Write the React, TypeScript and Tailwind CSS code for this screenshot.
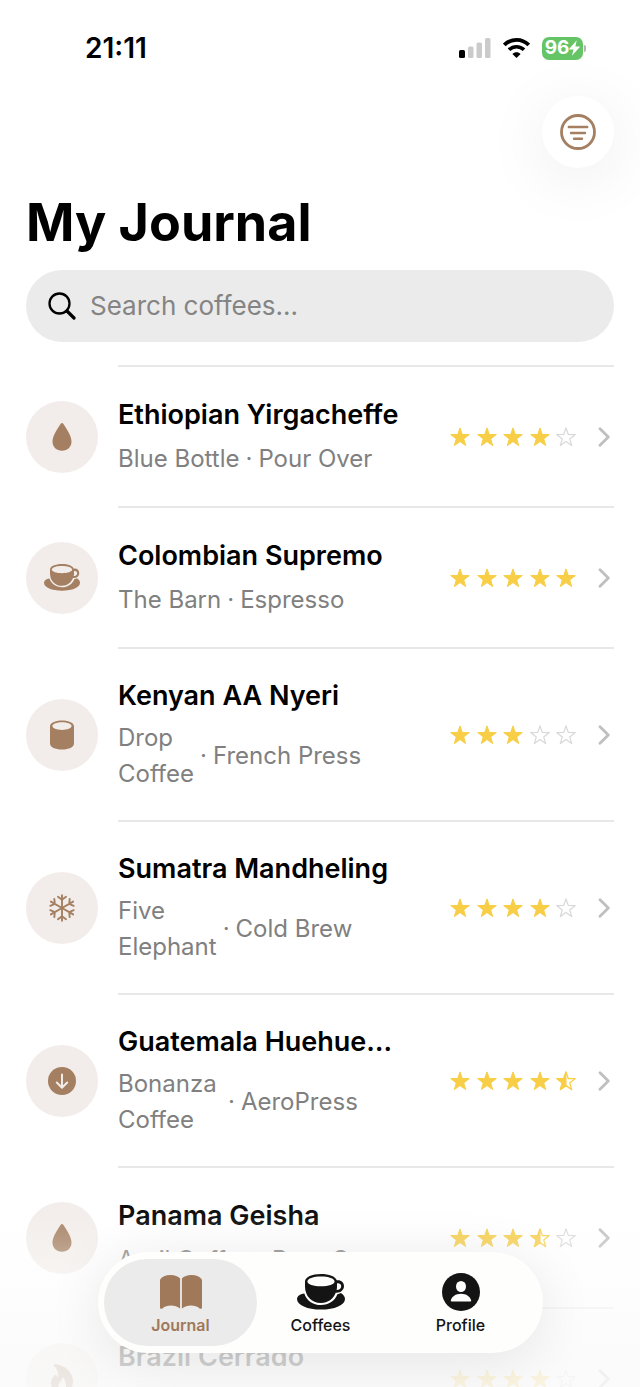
import type { ReactNode } from "react";

type IconName = "drop" | "cup" | "cylinder" | "snow" | "down" | "flame";

type Entry = {
  name: string;
  roaster: string;
  method: string;
  rating: number;
  icon: IconName;
  wrapClass?: string;
};

const entries: Entry[] = [
  { name: "Ethiopian Yirgacheffe", roaster: "Blue Bottle", method: "Pour Over", rating: 4, icon: "drop" },
  { name: "Colombian Supremo", roaster: "The Barn", method: "Espresso", rating: 5, icon: "cup" },
  { name: "Kenyan AA Nyeri", roaster: "Drop Coffee", method: "French Press", rating: 3, icon: "cylinder", wrapClass: "w-min" },
  { name: "Sumatra Mandheling", roaster: "Five Elephant", method: "Cold Brew", rating: 4, icon: "snow", wrapClass: "w-min" },
  { name: "Guatemala Huehuetenango", roaster: "Bonanza Coffee", method: "AeroPress", rating: 4.5, icon: "down", wrapClass: "w-[104px]" },
  { name: "Panama Geisha", roaster: "April Coffee", method: "Pour Over", rating: 3.5, icon: "drop" },
  { name: "Brazil Cerrado", roaster: "Square Mile", method: "Moka Pot", rating: 4, icon: "flame" },
];

function CupIcon({ className }: { className: string }) {
  return (
    <svg viewBox="0 0 48 36" className={className} fill="currentColor" aria-hidden="true">
      <path
        fillRule="evenodd"
        d="M8 7.5C8 3 15 0 24 0c8 0 14.500 2.300 15.800 6.300 4-.8 7.200 1.900 7.200 5.700 0 4.200-3.600 7.200-8.300 6.700C36.300 24.700 31 29 24 29 14.500 29 8 22 8 12.500V7.500ZM24 2.500C16.500 2.500 10.400 4.600 10.400 7.400S16.500 12.300 24 12.300s13.600-2.100 13.600-4.900S31.500 2.500 24 2.500ZM40 9.300v3.200c0 1.300-.1 2.500-.4 3.600 2.700-.1 4.600-1.700 4.600-3.900 0-2-1.800-3.300-4.200-2.900Z"
      />
      <path d="M7.300 19.400C9.500 26.400 15.800 31 24 31c7.800 0 14-4.200 16.400-10.700 1.200-.3 2.400-.7 3.500-1.300 2.500 1.500 4.100 3.800 4.100 6C48 31.200 37.500 35.600 24 35.600S0 31.200 0 25c0-2.600 2.800-5.200 7.300-5.600Z" />
    </svg>
  );
}

function MethodIcon({ name }: { name: IconName }) {
  switch (name) {
    case "drop":
      return (
        <svg viewBox="0 0 20 28" className="h-7 w-5" fill="currentColor" aria-hidden="true">
          <path d="M10 0c.6 0 1 .4 1.400 1C15 6.500 19.500 13 19.500 18.500c0 5.600-4 9.200-9.500 9.200S.5 24.100.5 18.500C.5 13 5 6.500 8.600 1 9 .4 9.400 0 10 0Z" />
        </svg>
      );
    case "cup":
      return <CupIcon className="h-[27px] w-9" />;
    case "cylinder":
      return (
        <svg viewBox="0 0 24 30" className="h-[30px] w-6" fill="currentColor" aria-hidden="true">
          <path
            fillRule="evenodd"
            d="M0 6.500C0 3 5 .5 12 .5s12 2.500 12 6v17c0 3.700-5 6-12 6s-12-2.300-12-6v-17ZM12 2.200C6.700 2.200 2.400 3.900 2.400 6.100S6.700 10 12 10s9.600-1.700 9.600-3.900S17.300 2.200 12 2.200Z"
          />
        </svg>
      );
    case "snow":
      return (
        <svg viewBox="-14 -14 28 28" className="size-7" fill="none" stroke="currentColor" strokeWidth="1.9" strokeLinecap="round" strokeLinejoin="round" aria-hidden="true">
          {[0, 60, 120, 180, 240, 300].map((angle) => (
            <path key={angle} transform={`rotate(${angle})`} d="M0 0V-12.800M-4-11.200 0-8.300 4-11.200" />
          ))}
        </svg>
      );
    case "down":
      return (
        <svg viewBox="0 0 28 28" className="size-7" aria-hidden="true">
          <circle cx="14" cy="14" r="14" fill="currentColor" />
          <path d="M14 7.500v12.800M8.800 15.500l5.200 5.200 5.200-5.200" fill="none" stroke="#f2edea" strokeWidth="2" strokeLinecap="round" strokeLinejoin="round" />
        </svg>
      );
    case "flame":
      return (
        <svg viewBox="0 0 24 30" className="h-[30px] w-6" fill="currentColor" aria-hidden="true">
          <path
            fillRule="evenodd"
            d="M4 1.500C3.500.7 4.200.2 5 .3 15 1 23 8 23 17.500 23 25 18 29.500 12 29.500S1 25.500 1 19.500c0-4 2-7 4-8.500.7-.5 1.400-.2 1.700.5.300.8.800 1.300 1.400 1.600C8.500 8.500 7 5 4 1.500ZM12.500 13c.5 3.500-4 5-4 9 0 2.500 1.500 4 3.700 4s3.800-1.600 3.800-4c0-3.200-1-6.500-3.500-9Z"
          />
        </svg>
      );
  }
}

const STAR = "M10 .9 12.300 7.500 19.300 7.600 13.700 11.900 15.700 18.600 10 14.600 4.300 18.600 6.300 11.900 .7 7.600 7.700 7.500Z";

function Star({ fill }: { fill: "full" | "half" | "empty" }) {
  if (fill === "empty") {
    return (
      <svg viewBox="0 0 20 20" className="size-5" fill="none" stroke="#d8d8da" strokeWidth="1.2" strokeLinejoin="round" aria-hidden="true">
        <path d={STAR} />
      </svg>
    );
  }
  return (
    <svg viewBox="0 0 20 20" className="size-5 text-[#f7ce46]" stroke="currentColor" strokeWidth="1" strokeLinejoin="round" aria-hidden="true">
      {fill === "full" ? (
        <path d={STAR} fill="currentColor" />
      ) : (
        <>
          <path d={STAR} fill="none" strokeWidth="1.3" />
          <path d="M10 .9V14.600L4.300 18.600 6.300 11.900 .7 7.600 7.700 7.500Z" fill="currentColor" />
        </>
      )}
    </svg>
  );
}

function Rating({ value }: { value: number }) {
  return (
    <span role="img" aria-label={`${value} out of 5`} className="flex w-[126px] shrink-0 justify-between">
      {[1, 2, 3, 4, 5].map((n) => (
        <Star key={n} fill={value >= n ? "full" : value >= n - 0.5 ? "half" : "empty"} />
      ))}
    </span>
  );
}

function EntryRow({ entry }: { entry: Entry }) {
  return (
    <li>
      <a href="#entry" className="flex items-stretch gap-5">
        <span className="flex items-center pt-0.5">
          <span className="flex size-[72px] items-center justify-center rounded-full bg-[#f2edea] text-[#a47f61]">
            <MethodIcon name={entry.icon} />
          </span>
        </span>
        <span
          className={
            entry.wrapClass
              ? "flex min-h-[173px] min-w-0 flex-1 items-center border-t-2 border-[#e8e8e8] py-7"
              : "flex min-h-[141px] min-w-0 flex-1 items-center border-t-2 border-[#e8e8e8] py-7"
          }
        >
          <span className={entry.wrapClass ? "flex min-w-0 flex-1 flex-col gap-1.5 pr-[50px]" : "flex min-w-0 flex-1 flex-col gap-2 pr-[50px]"}>
            <span className="truncate text-[27px] leading-9 font-semibold text-black">{entry.name}</span>
            <span className="flex items-center gap-1.5 text-2xl leading-9 text-[#808080]">
              <span className={entry.wrapClass ?? "whitespace-nowrap"}>{entry.roaster}</span>
              <span>·</span>
              <span className="whitespace-nowrap">{entry.method}</span>
            </span>
          </span>
          <Rating value={entry.rating} />
          <svg viewBox="0 0 12 20" className="mr-1 ml-[22px] h-5 w-3 shrink-0" fill="none" stroke="#bfbfbf" strokeWidth="2.800" strokeLinecap="round" strokeLinejoin="round" aria-hidden="true">
            <path d="M2 1.800 10.300 10 2 18.200" />
          </svg>
        </span>
      </a>
    </li>
  );
}

function StatusBar() {
  return (
    <div className="flex h-24 items-center justify-between pr-[54px] pl-[85px]">
      <span className="text-[28px] leading-8 font-semibold">21:11</span>
      <div className="flex items-center gap-3">
        <svg viewBox="0 0 32 20" className="h-5 w-8" aria-hidden="true">
          <rect x="0" y="12" width="6" height="8" rx="1.500" fill="#000" />
          <rect x="9" y="8.500" width="5.500" height="11.500" rx="1.500" fill="#cbcbcb" />
          <rect x="17.500" y="4.500" width="5.500" height="15.500" rx="1.500" fill="#cbcbcb" />
          <rect x="26" y="0" width="5.500" height="20" rx="1.500" fill="#cbcbcb" />
        </svg>
        <svg viewBox="0 0 27 20" className="h-5 w-[27px]" fill="none" stroke="#000" aria-hidden="true">
          <path d="M1.300 7C8 .2 19 .2 25.700 7" strokeWidth="3.800" />
          <path d="M6 11.800c4.200-4.100 10.800-4.100 15 0" strokeWidth="3.600" />
          <path d="M13.500 20 9.400 15.900c2.300-2.300 5.900-2.300 8.200 0Z" fill="#000" stroke="none" />
        </svg>
        <div className="flex items-center gap-px">
          <div className="flex h-[23px] w-[41px] items-center justify-center rounded-[7px] bg-[#65c466] text-white">
            <span className="text-[19px] leading-5 font-bold">96</span>
            <svg viewBox="0 0 10 14" className="h-4 w-[11px]" fill="currentColor" aria-hidden="true">
              <path d="M7 0 .3 7.600C0 8 .2 8.300.600 8.300H4.200L2.600 14 9.700 6.300C10 5.900 9.800 5.600 9.400 5.600H5.800Z" />
            </svg>
          </div>
          <span className="h-[7px] w-[2px] rounded-r-full bg-[#b5b5b5]" />
        </div>
      </div>
    </div>
  );
}

function Tab({ label, active, children }: { label: string; active?: boolean; children: ReactNode }) {
  return (
    <button
      type="button"
      aria-current={active ? "page" : undefined}
      className={
        active
          ? "flex w-[153px] flex-col items-center justify-center gap-0.5 rounded-full bg-[#ebebeb] pt-1 text-[#a0785a]"
          : "flex w-[153px] flex-col items-center justify-center gap-0.5 rounded-full pt-1 text-[#141414]"
      }
    >
      <span className="flex h-[38px] items-center">{children}</span>
      <span className={active ? "text-base leading-6 font-semibold" : "text-base leading-6 font-medium"}>{label}</span>
    </button>
  );
}

export default function App() {
  return (
    <div className="relative flex h-screen flex-col overflow-hidden bg-white font-['Inter',sans-serif] text-black">
      <StatusBar />
      <header className="px-[26px]">
        <div className="flex justify-end">
          <button type="button" aria-label="Filter" className="flex size-[72px] items-center justify-center rounded-full bg-white text-[#a47f61] shadow-[0_10px_64px_rgba(0,0,0,0.08)]">
            <svg viewBox="0 0 36 36" className="size-9" fill="none" stroke="currentColor" strokeLinecap="round" aria-hidden="true">
              <circle cx="18" cy="18" r="16.500" strokeWidth="2.800" />
              <path d="M8.800 13h18.400M11 19h14M14 24.700h8" strokeWidth="2.400" />
            </svg>
          </button>
        </div>
        <h1 className="mt-5 text-[52px] leading-[70px] font-bold">My Journal</h1>
        <div className="mt-3 flex h-[72px] items-center gap-3.5 rounded-full bg-[#ebebeb] px-[22px]">
          <svg viewBox="0 0 28 28" className="size-7 shrink-0" fill="none" stroke="#000" strokeLinecap="round" aria-hidden="true">
            <circle cx="11.500" cy="11.500" r="10" strokeWidth="2.300" />
            <path d="m19 19 7 7" strokeWidth="3.200" />
          </svg>
          <input type="search" aria-label="Search coffees" placeholder="Search coffees..." className="min-w-0 flex-1 bg-transparent text-[26px] leading-9 outline-none placeholder:text-[#848484]" />
        </div>
      </header>
      <main className="mt-[23px] min-h-0 flex-1 overflow-hidden px-[26px]">
        <ul>
          {entries.map((entry) => (
            <EntryRow key={entry.name} entry={entry} />
          ))}
        </ul>
      </main>
      <div className="pointer-events-none absolute inset-x-0 bottom-0 h-[200px] bg-[linear-gradient(to_bottom,rgba(252,252,252,0)_0%,rgba(252,252,252,0.08)_15%,rgba(252,252,252,0.22)_27%,rgba(252,252,252,0.7)_60%,rgba(250,250,250,0.82)_85%,rgba(250,250,250,0.86)_100%)]" />
      <nav aria-label="Main" className="absolute bottom-[34px] left-[98px] flex h-[101px] -space-x-[13px] rounded-full bg-[#fefefd] px-1.5 py-[7px] shadow-[0_8px_56px_rgba(0,0,0,0.09)]">
        <Tab label="Journal" active>
          <svg viewBox="0 0 44 36" className="h-9 w-11" fill="currentColor" aria-hidden="true">
            <path d="M1.500 5C3.500 2.400 7 1 11.500 1c4.300 0 7.600 1.300 9.600 3.500V34.500C18.500 32.600 15.400 31.600 12 31.600c-3.400 0-6.300 1-8.600 2.800-.9.700-2.400.4-2.400-.9V6.600c0-.6.200-1.100.5-1.600ZM42.500 5C40.500 2.400 37 1 32.500 1c-4.300 0-7.600 1.300-9.600 3.500V34.500c2.600-1.900 5.700-2.900 9.100-2.900 3.400 0 6.300 1 8.600 2.800.9.700 2.400.4 2.400-.9V6.600c0-.6-.2-1.100-.5-1.600Z" />
          </svg>
        </Tab>
        <Tab label="Coffees">
          <CupIcon className="h-9 w-12" />
        </Tab>
        <Tab label="Profile">
          <svg viewBox="0 0 38 38" className="size-[38px]" aria-hidden="true">
            <circle cx="19" cy="19" r="19" fill="currentColor" />
            <ellipse cx="19" cy="13.500" rx="5" ry="5.600" fill="#fefefd" />
            <path d="M9.500 28.500c-.5 0-.8-.4-.7-.9.800-4.100 5-6.900 10.200-6.900s9.400 2.800 10.200 6.900c.1.500-.2.900-.7.900Z" fill="#fefefd" />
          </svg>
        </Tab>
      </nav>
    </div>
  );
}
